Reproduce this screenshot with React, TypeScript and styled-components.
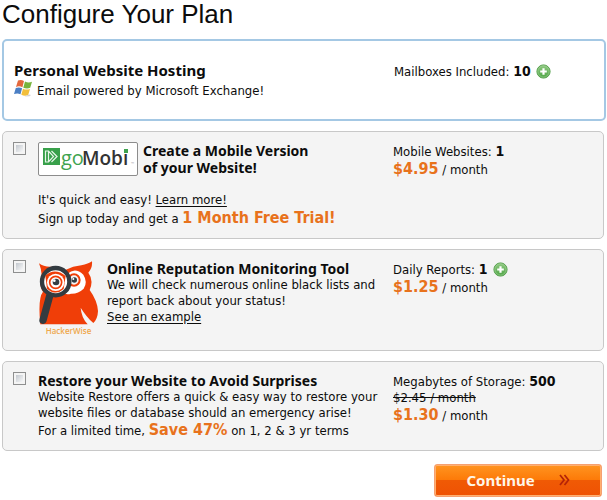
import React from "react";
import styled, { createGlobalStyle, css } from "styled-components";

const GlobalStyle = createGlobalStyle`
  *, *::before, *::after { box-sizing: border-box; }
  body {
    margin: 0;
    background: #fff;
    color: #0c0c0c;
    font: 13px/16px "DejaVu Sans Condensed", "DejaVu Sans", sans-serif;
  }
`;

const Page = styled.main`
  display: flex;
  flex-direction: column;
  gap: 10px;
  padding: 0 3px 3px 2px;
`;

const PageTitle = styled.h1`
  margin: 0;
  font: 400 26px/29px "Liberation Sans", Arial, sans-serif;
`;

const cardBase = css`
  display: flex;
  align-items: flex-start;
  border-radius: 5px;
`;

const PlanCard = styled.section`
  ${cardBase}
  margin-right: -2px;
  padding: 21px 10px 16px 10px;
  border: 2px solid #a4c8e4;
`;

const OptionCard = styled.section`
  ${cardBase}
  gap: 12px;
  padding: 10px;
  border: 1px solid #c8c8c8;
  background: #f4f4f4;
`;

const Check = styled.input`
  appearance: none;
  flex: none;
  width: 13px;
  height: 13px;
  margin: 0;
  border: 1px solid #8e8f8f;
  background: linear-gradient(135deg, #b4bac2, #f5f6f7 80%);
  box-shadow: inset 0 0 0 2px #f4f4f4;
  &:checked { background: #3f7fc0; }
`;

const Main = styled.div`
  flex: 1;
  min-width: 0;
`;

const Side = styled.div`
  flex: none;
  width: 200px;
`;

const Heading = styled.h2<{ $large?: boolean }>`
  margin: 0;
  font: 700 ${(p) => (p.$large ? 15 : 14)}px/17px "Noto Sans", sans-serif;
`;

const Text = styled.p`
  margin: 0;
  white-space: nowrap;
`;

const OfferText = styled(Text)`
  line-height: 18px;
`;

const IconLine = styled(Text)`
  display: flex;
  align-items: flex-start;
  gap: 4px;
  line-height: 24px;
`;

const Quantity = styled(Text)`
  display: flex;
  align-items: center;
  gap: 5px;
  height: 18px;
`;

const Count = styled.b`
  font-size: 14px;
`;

const Accent = styled.strong`
  color: #e8721c;
  font-size: 16px;
`;

const OldPrice = styled.del`
  display: block;
`;

const TextLink = styled.a`
  color: inherit;
  text-decoration: underline;
  text-underline-offset: 2px;
`;

const LogoRow = styled.div`
  display: flex;
  gap: 5px;
  margin-bottom: 15px;
`;

const LogoFrame = styled.div`
  flex: none;
  width: 100px;
  height: 34px;
  border: 1px solid #8c8c8c;
  border-radius: 2px;
  background: #fff;
`;

const OwlRow = styled.div`
  display: flex;
  gap: 8px;
`;

const OwlFigure = styled.figure`
  display: flex;
  flex-direction: column;
  align-items: center;
  width: 61px;
  margin: 0;
  padding-bottom: 4px;
  color: #efa84c;
  font: 600 8px/10px "Open Sans", sans-serif;
`;

const AddButton = styled.button`
  display: flex;
  padding: 0;
  border: 0;
  background: none;
  cursor: pointer;
`;

const Actions = styled.div`
  display: flex;
  justify-content: flex-end;
  padding: 3px 2px 0 0;
`;

const ContinueButton = styled.button`
  display: flex;
  align-items: center;
  justify-content: center;
  gap: 24px;
  width: 168px;
  height: 33px;
  padding: 0 0 2px;
  border: 1px solid #f6a070;
  border-radius: 3px;
  background: linear-gradient(#ff9420 0, #fd7a08 48%, #f05a05 50%, #ef5203 100%);
  box-shadow: inset 0 0 0 1px #ffb070;
  color: #fff6e8;
  font: 700 15px/20px "Noto Sans", sans-serif;
  cursor: pointer;
`;

function AddMore({ label }: { label: string }) {
  return (
    <AddButton type="button" aria-label={label}>
      <svg width="15" height="15" viewBox="0 0 15 15">
        <defs>
          <linearGradient id="leaf" x1="0" y1="0" x2="0" y2="1">
            <stop offset="0" stopColor="#90c982" />
            <stop offset="1" stopColor="#4ca443" />
          </linearGradient>
        </defs>
        <circle cx="7.5" cy="7.5" r="6.6" fill="url(#leaf)" stroke="#56a04d" />
        <circle cx="7.5" cy="7.5" r="5.6" fill="none" stroke="#a4d39a" strokeWidth=".6" />
        <path d="M7.5 4.2v6.6M4.2 7.5h6.6" stroke="#fff" strokeWidth="2.2" />
      </svg>
    </AddButton>
  );
}

function WindowsFlag() {
  return (
    <svg width="19" height="18" viewBox="0 0 19 18" aria-hidden="true">
      <path d="M4 1.6Q7 .2 10 2L8.4 8.3Q5.3 6.6 2 8Z" fill="#e4683c" />
      <path d="M11 2.5Q14.5 4.3 18 2.7L16.2 8.8Q13 10.3 9.3 8.7Z" fill="#78b43e" />
      <path d="M1.8 9Q5 7.7 8.1 9.3L6.5 15.2Q3.5 13.7 0 15Z" fill="#4b7fc4" />
      <path d="M9 9.7Q12.5 11.4 16 9.9L14.2 16.1Q10.8 17.7 7.3 15.8Z" fill="#f2bf3c" />
      <path d="M15 15.5l2 .6-1.5 1.2-5 .2Z" fill="#d2d2d2" />
    </svg>
  );
}

function GoMobiLogo() {
  return (
    <svg width="98" height="32" viewBox="0 0 98 32" role="img" aria-label="goMobi">
      <rect x="4" y="5" width="17" height="17" fill="#38a04a" />
      <path d="M6.5 8h3l5 5.5-5 5.5h-3ZM9.5 8v11M12.5 8l5.5 5.5-5.5 5.5" fill="none" stroke="#e8f6e9" strokeWidth="1.2" />
      <text x="22" y="22" fontFamily="Open Sans, sans-serif" fontSize="20" fill="#3fa34f">go</text>
      <text x="43" y="22" fontFamily="Open Sans, sans-serif" fontSize="19" fontWeight="600" fill="#333">Mobi</text>
      <rect x="85" y="6" width="4" height="4" fill="#3fa34f" />
      <text x="92" y="22" fontFamily="Open Sans, sans-serif" fontSize="4" fill="#aaa">™</text>
    </svg>
  );
}

function Owl() {
  return (
    <svg width="61" height="66" viewBox="0 0 183 198" aria-hidden="true">
      <path d="M3 10Q18 22 43 20L82 30Q105 18 130 16Q151 12 162 4Q164 24 151 38Q168 61 155 90Q178 122 180 153Q179 177 166 189Q146 172 128 143Q130 172 149 193H7Q-1 115 15 95Q5 85 8 56Q15 40 3 10Z" fill="#f03e08" />
      <path d="M88 42Q111 20 136 44Q150 66 137 86Q120 102 99 101Q83 107 76 96L94 79Z" fill="#fff" />
      <circle cx="108" cy="60" r="17" fill="#f5f5f5" stroke="#f03e08" strokeWidth="6" />
      <circle cx="109" cy="60" r="8" fill="#343f45" />
      <circle cx="106" cy="57" r="3" fill="#fff" />
      <path d="M35 108L15 181" stroke="#333b40" strokeWidth="22" strokeLinecap="round" />
      <circle cx="53" cy="65" r="41" fill="#fff" stroke="#333b40" strokeWidth="13" />
      <path d="M22 47Q50 22 83 48L77 87Q53 109 27 86Z" fill="#f03e08" />
      <circle cx="53" cy="67" r="26" fill="#fff" />
      <circle cx="53" cy="67" r="18" fill="none" stroke="#f03e08" strokeWidth="5" />
      <circle cx="54" cy="66" r="10" fill="#343f45" />
      <circle cx="49" cy="62" r="4" fill="#fff" />
    </svg>
  );
}

function Chevrons() {
  return (
    <svg width="11" height="12" viewBox="0 0 11 12" aria-hidden="true">
      <path d="M1 1l4 5-4 5M5.5 1l4 5-4 5" fill="none" stroke="#b32208" strokeWidth="1.7" />
    </svg>
  );
}

export default function App() {
  return (
    <>
      <GlobalStyle />
      <Page>
        <PageTitle>Configure Your Plan</PageTitle>

        <PlanCard>
          <Main>
            <Heading $large>Personal Website Hosting</Heading>
            <IconLine><WindowsFlag />Email powered by Microsoft Exchange!</IconLine>
          </Main>
          <Side>
            <Quantity>
              <span>Mailboxes Included: <Count>10</Count></span>
              <AddMore label="Add mailboxes" />
            </Quantity>
          </Side>
        </PlanCard>

        <OptionCard>
          <Check type="checkbox" aria-labelledby="mobile-title" />
          <Main>
            <LogoRow>
              <LogoFrame><GoMobiLogo /></LogoFrame>
              <Heading id="mobile-title">Create a Mobile Version<br />of your Website!</Heading>
            </LogoRow>
            <OfferText>It's quick and easy! <TextLink href="#learn">Learn more!</TextLink></OfferText>
            <OfferText>Sign up today and get a <Accent>1 Month Free Trial!</Accent></OfferText>
          </Main>
          <Side>
            <Quantity><span>Mobile Websites: <Count>1</Count></span></Quantity>
            <OfferText><Accent>$4.95</Accent> / month</OfferText>
          </Side>
        </OptionCard>

        <OptionCard>
          <Check type="checkbox" aria-labelledby="reputation-title" />
          <Main>
            <OwlRow>
              <OwlFigure>
                <Owl />
                <figcaption>HackerWise</figcaption>
              </OwlFigure>
              <div>
                <Heading id="reputation-title">Online Reputation Monitoring Tool</Heading>
                <Text>We will check numerous online black lists and<br />report back about your status!</Text>
                <Text><TextLink href="#example">See an example</TextLink></Text>
              </div>
            </OwlRow>
          </Main>
          <Side>
            <Quantity>
              <span>Daily Reports: <Count>1</Count></span>
              <AddMore label="Add daily reports" />
            </Quantity>
            <OfferText><Accent>$1.25</Accent> / month</OfferText>
          </Side>
        </OptionCard>

        <OptionCard>
          <Check type="checkbox" aria-labelledby="restore-title" />
          <Main>
            <Heading id="restore-title">Restore your Website to Avoid Surprises</Heading>
            <Text>Website Restore offers a quick &amp; easy way to restore your<br />website files or database should an emergency arise!</Text>
            <OfferText>For a limited time, <Accent>Save 47%</Accent> on 1, 2 &amp; 3 yr terms</OfferText>
          </Main>
          <Side>
            <Quantity><span>Megabytes of Storage: <Count>500</Count></span></Quantity>
            <OldPrice>$2.45 / month</OldPrice>
            <OfferText><Accent>$1.30</Accent> / month</OfferText>
          </Side>
        </OptionCard>

        <Actions>
          <ContinueButton type="button">Continue <Chevrons /></ContinueButton>
        </Actions>
      </Page>
    </>
  );
}
